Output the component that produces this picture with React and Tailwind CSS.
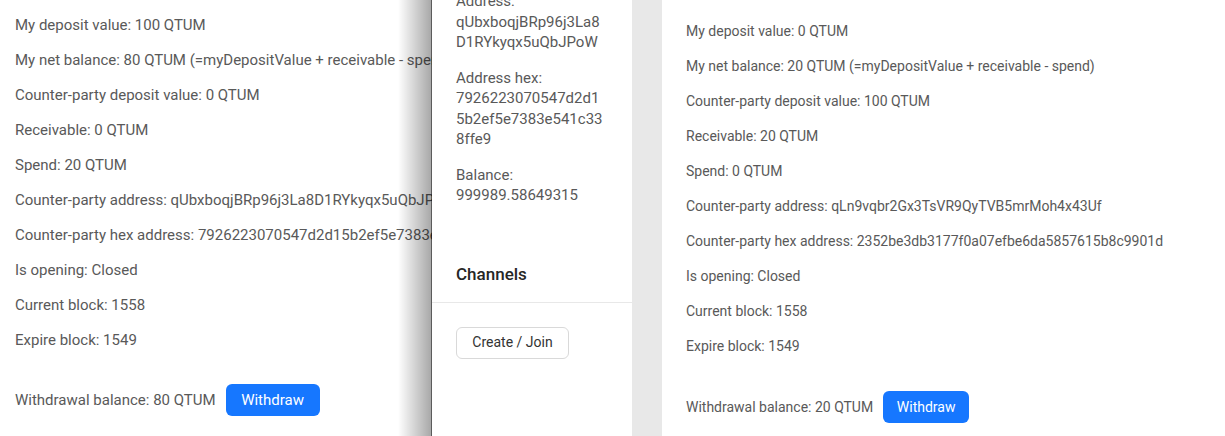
import React from 'react';

const leftRows = [
  'My deposit value: 100 QTUM',
  'My net balance: 80 QTUM (=myDepositValue + receivable - spend)',
  'Counter-party deposit value: 0 QTUM',
  'Receivable: 0 QTUM',
  'Spend: 20 QTUM',
  'Counter-party address: qUbxboqjBRp96j3La8D1RYkyqx5uQbJPoW',
  'Counter-party hex address: 7926223070547d2d15b2ef5e7383e541c338ffe9',
  'Is opening: Closed',
  'Current block: 1558',
  'Expire block: 1549',
];

const rightRows = [
  'My deposit value: 0 QTUM',
  'My net balance: 20 QTUM (=myDepositValue + receivable - spend)',
  'Counter-party deposit value: 100 QTUM',
  'Receivable: 20 QTUM',
  'Spend: 0 QTUM',
  'Counter-party address: qLn9vqbr2Gx3TsVR9QyTVB5mrMoh4x43Uf',
  'Counter-party hex address: 2352be3db3177f0a07efbe6da5857615b8c9901d',
  'Is opening: Closed',
  'Current block: 1558',
  'Expire block: 1549',
];

const font = { fontFamily: 'Roboto, "Noto Sans", sans-serif' };

export default function App() {
  return (
    <div className="flex h-[436px] w-[1225px] overflow-hidden bg-white text-[#595959]" style={font}>
      {/* Left channel (under the drawer) */}
      <div className="relative w-[432px] shrink-0 overflow-hidden pl-[15px] pt-[8px] text-[15px]">
        {leftRows.map((r) => (
          <div key={r} className="flex h-[35px] items-center whitespace-nowrap">{r}</div>
        ))}
        <div className="mt-[26px] flex items-center whitespace-nowrap">
          <span>Withdrawal balance: 80 QTUM</span>
          <button className="ml-[10px] h-[32px] w-[94px] rounded-[6px] bg-[#1677ff] text-white">Withdraw</button>
        </div>
        <div className="absolute right-0 top-0 h-full w-[34px] bg-gradient-to-r from-transparent to-black/35" />
        <div className="absolute right-0 top-0 h-full w-px bg-black/45" />
      </div>

      {/* Wallet drawer */}
      <div className="flex w-[200px] shrink-0 flex-col bg-white text-[15px] leading-[20.5px]">
        <div className="-mt-[9px] px-6">
          <p className="mb-[15px]">
            <span className="block">Address:</span>
            <span className="block">qUbxboqjBRp96j3La8</span>
            <span className="block">D1RYkyqx5uQbJPoW</span>
          </p>
          <p className="mb-[15px]">
            <span className="block">Address hex:</span>
            <span className="block">7926223070547d2d1</span>
            <span className="block">5b2ef5e7383e541c33</span>
            <span className="block">8ffe9</span>
          </p>
          <p className="mb-[15px]">
            <span className="block">Balance:</span>
            <span className="block">999989.58649315</span>
          </p>
        </div>
        <div className="mt-[25px] border-b border-[#e8e8e8] px-6 pb-4 pt-4 text-[17px] font-medium leading-[24px] text-[#262626]">
          Channels
        </div>
        <div className="px-6 pt-6">
          <button className="h-[32px] w-[113px] rounded-[6px] border border-[#d9d9d9] bg-white text-[14px] text-[#333]">
            Create / Join
          </button>
        </div>
      </div>

      {/* Gutter */}
      <div className="w-[30px] shrink-0 bg-[#e8e8e8]" />

      {/* Right channel */}
      <div className="flex-1 pl-6 pt-[14px] text-[14px]">
        {rightRows.map((r) => (
          <div key={r} className="flex h-[35px] items-center whitespace-nowrap">{r}</div>
        ))}
        <div className="mt-[27px] flex items-center whitespace-nowrap">
          <span>Withdrawal balance: 20 QTUM</span>
          <button className="ml-[10px] h-[32px] w-[86px] rounded-[6px] bg-[#1677ff] text-white">Withdraw</button>
        </div>
      </div>
    </div>
  );
}
